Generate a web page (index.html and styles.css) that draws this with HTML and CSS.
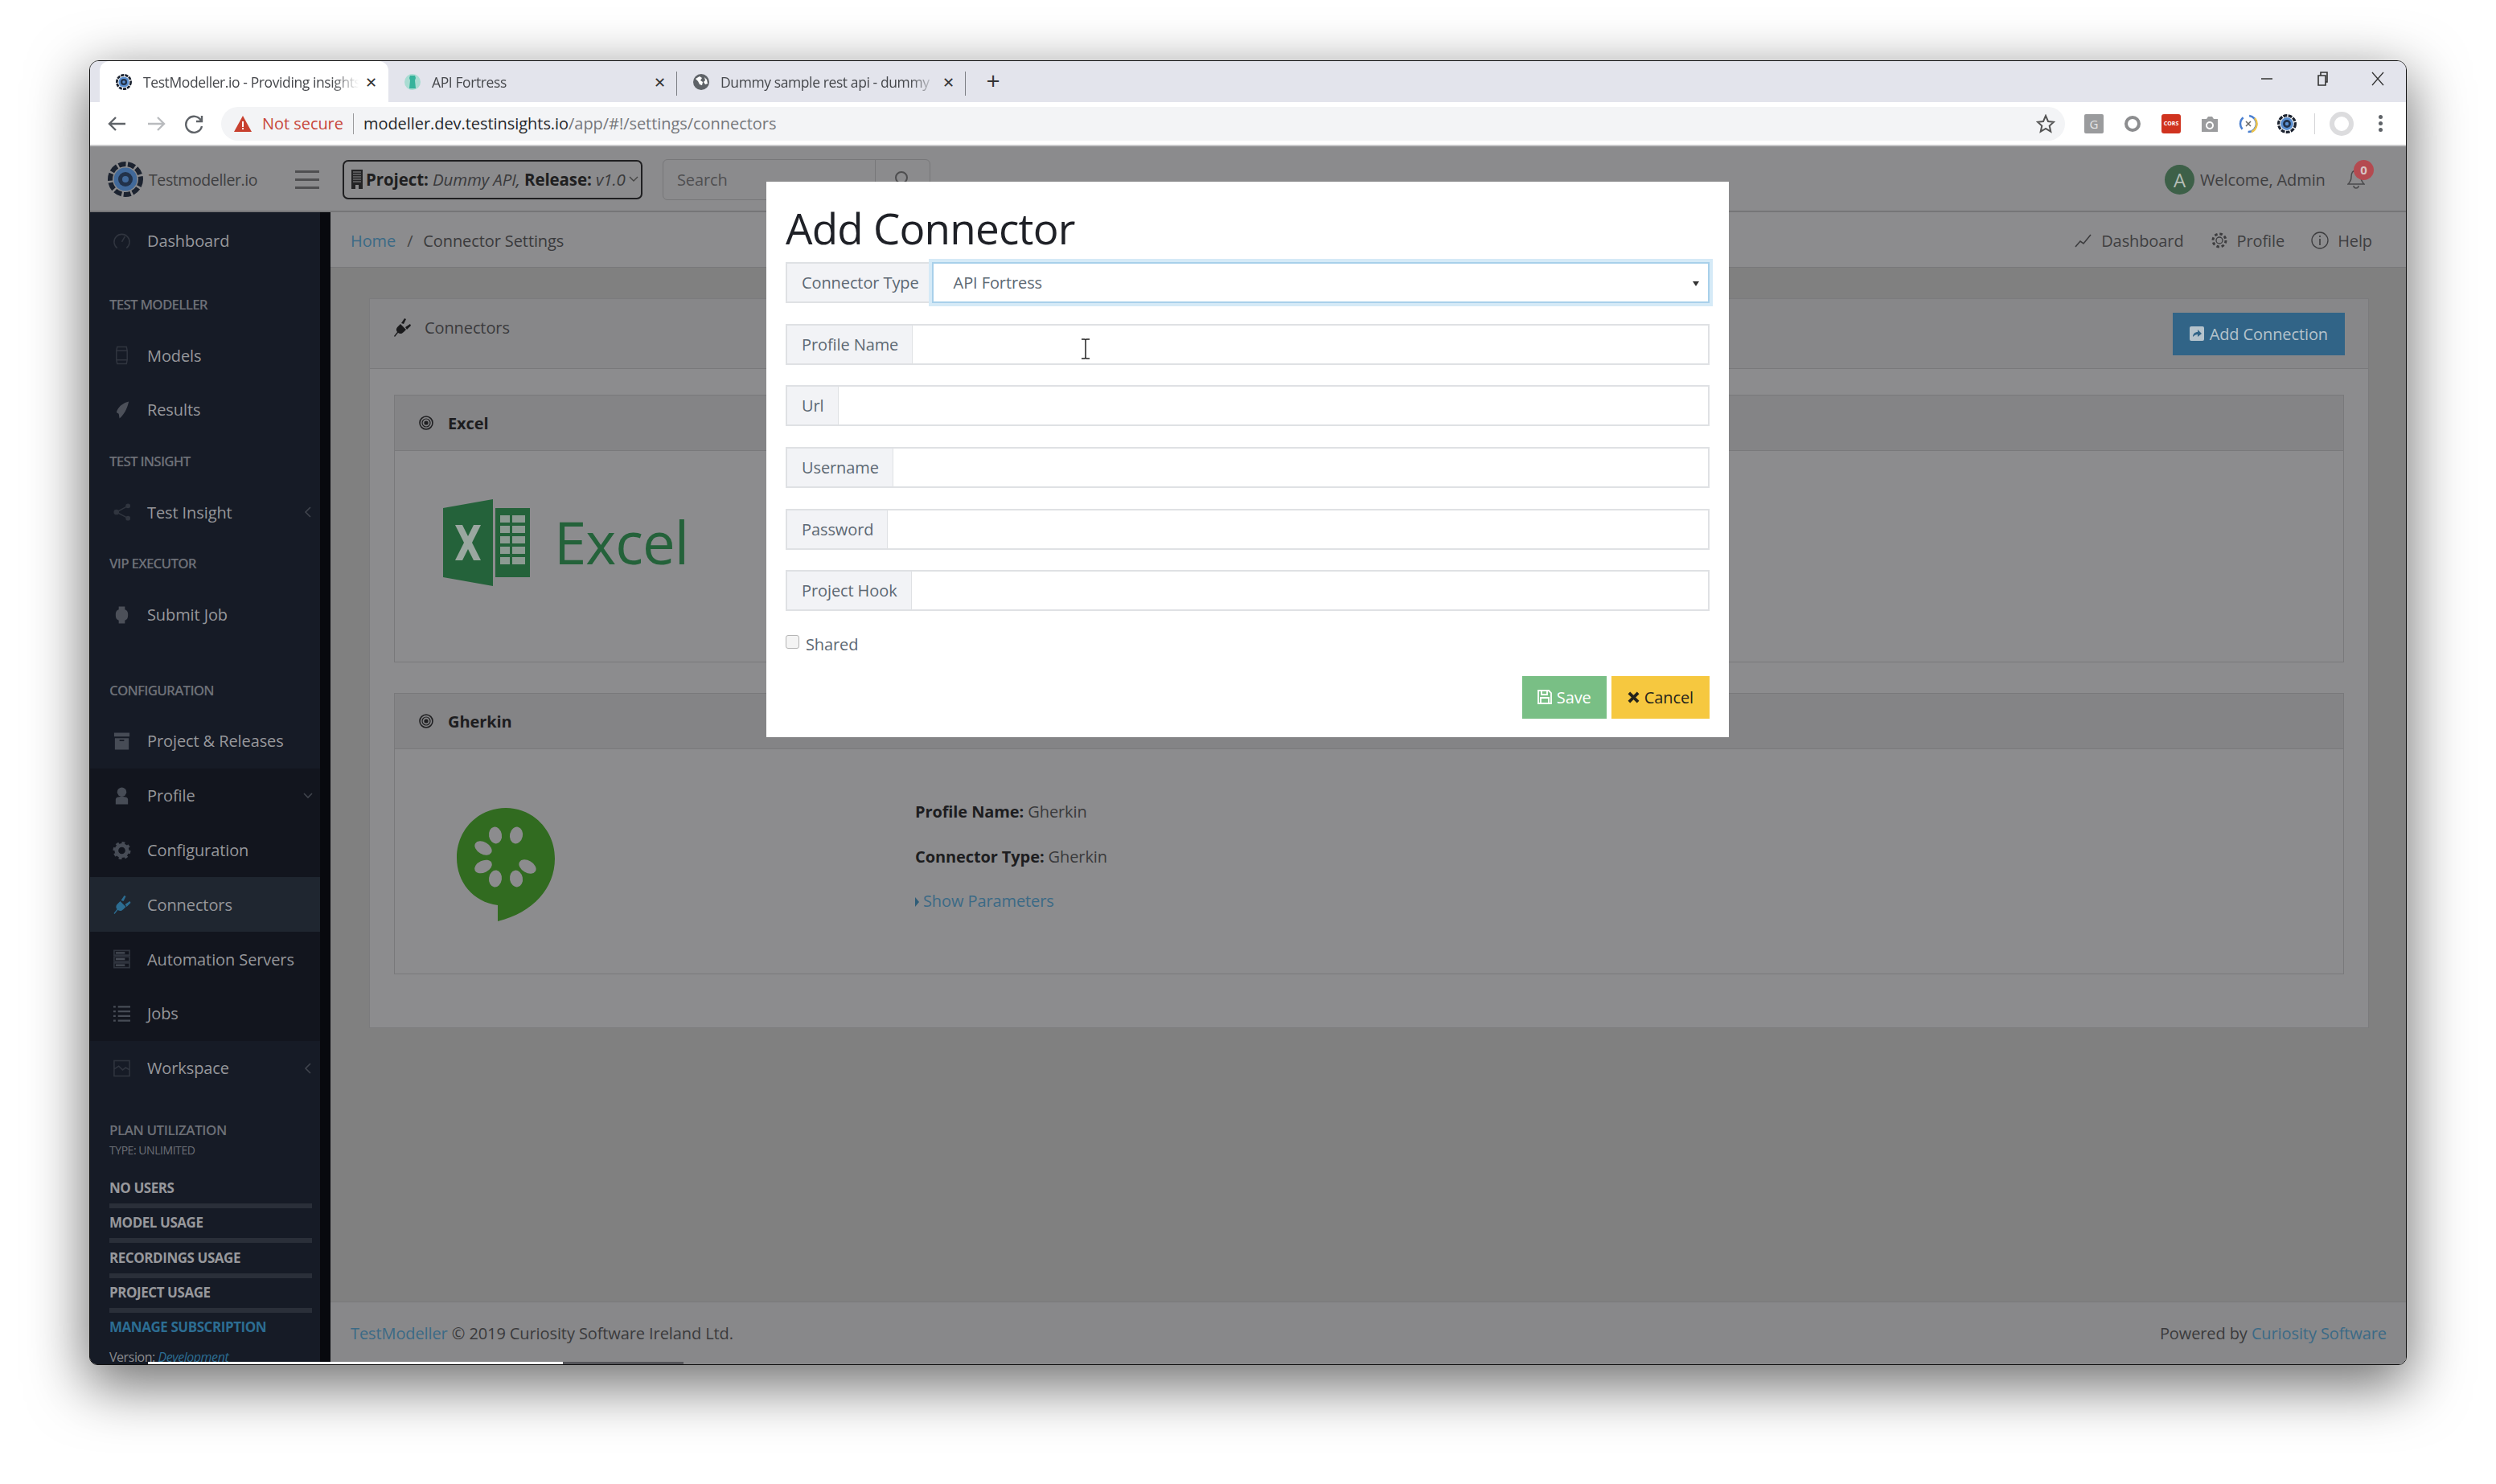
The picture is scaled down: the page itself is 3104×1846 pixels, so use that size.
FILE: index.html
```html
<!DOCTYPE html>
<html lang="en">

<head>
   <meta charset="UTF-8">
   <title>TestModeller.io - Connectors</title>
   <link rel="stylesheet" href="styles.css">
</head>

<body>
   <svg class="defs" width="0" height="0">
      <symbol id="tm-logo" viewBox="0 0 44 44">
         <circle cx="22" cy="22" r="19" fill="none" stroke="#1c2330" stroke-width="6" stroke-dasharray="9 2.5"/>
         <circle cx="22" cy="22" r="14.500" fill="currentColor"/>
         <circle cx="22" cy="22" r="9" fill="#22324a"/>
         <circle cx="22" cy="22" r="4" fill="currentColor"/>
      </symbol>
      <symbol id="bullseye" viewBox="0 0 18 18">
         <circle cx="9" cy="9" r="8" fill="none" stroke="#1f1f21" stroke-width="1.6"/>
         <circle cx="9" cy="9" r="5" fill="none" stroke="#1f1f21" stroke-width="1.2"/>
         <circle cx="9" cy="9" r="2.6" fill="#1f1f21"/>
      </symbol>
      <symbol id="plug" viewBox="0 0 22 24">
         <path d="M1 23l4-5c-2-3-1-5 1-7l3-3 7 7-3 3c-2 2-4 3-7 1l-4 5zM10 7l4-6 2 1-3 6zM15 12l6-4 1 2-5 5z"/>
      </symbol>
   </svg>

   <div class="window">

      <!-- browser chrome -->
      <div class="tabstrip">
         <div class="tab tab-active">
            <svg class="favicon tm-blue"><use href="#tm-logo"/></svg>
            <span class="tab-title">TestModeller.io - Providing insights</span>
            <span class="tab-close">✕</span>
         </div>
         <div class="tab tab-sep">
            <svg class="favicon" viewBox="0 0 20 20">
               <circle cx="10" cy="10" r="10" fill="#a9dcd2"/>
               <path d="M7 2h6l1 3-1 3 1 10H6l1-10-1-3z" fill="#35b39b"/>
            </svg>
            <span class="tab-title">API Fortress</span>
            <span class="tab-close">✕</span>
         </div>
         <div class="tab tab-sep">
            <svg class="favicon" viewBox="0 0 20 20">
               <circle cx="10" cy="10" r="10" fill="#5f6368"/>
               <path d="M3 6l5-3 3 2-2 3 3 2-1 4-3-1-2-4zM14 4l3 3 1 5-3 1-2-3 2-2z" fill="#fff"/>
            </svg>
            <span class="tab-title">Dummy sample rest api - dummy</span>
            <span class="tab-close">✕</span>
         </div>
         <div class="new-tab">+</div>
         <div class="win-controls">
            <svg viewBox="0 0 20 20"><path d="M3 10h14" stroke="#333" stroke-width="1.6"/></svg>
            <svg viewBox="0 0 20 20"><path d="M5 6h9v12H5zM8 6V2h8v12h-2" fill="none" stroke="#333" stroke-width="1.6"/></svg>
            <svg viewBox="0 0 20 20"><path d="M3 2l14 16M17 2L3 18" stroke="#333" stroke-width="1.3"/></svg>
         </div>
      </div>

      <div class="toolbar">
         <svg class="nav-btn" viewBox="0 0 48 24"><path d="M34 12H14M22 4l-8 8 8 8" fill="none" stroke="#5f6368" stroke-width="2.4"/></svg>
         <svg class="nav-btn" viewBox="0 0 48 24"><path d="M14 12h20M26 4l8 8-8 8" fill="none" stroke="#b9bbbe" stroke-width="2.4"/></svg>
         <svg class="nav-btn" viewBox="0 0 48 24"><path d="M32 8a10 10 0 1 0 1 7M33 2v7h-7" fill="none" stroke="#5f6368" stroke-width="2.4"/></svg>
         <div class="omnibox">
            <svg class="warn" viewBox="0 0 22 20"><path d="M11 0l11 20H0z" fill="#c8402f"/><path d="M10 7h2v7h-2zM10 15h2v2h-2z" fill="#fff"/></svg>
            <span class="not-secure">Not secure</span>
            <span class="omni-sep"></span>
            <span class="url">modeller.dev.testinsights.io<span class="url-path">/app/#!/settings/connectors</span></span>
            <svg class="star" viewBox="0 0 24 24"><path d="M12 2l3 7 7 .7-5.300 4.800 1.600 7.200L12 18l-6.300 3.700 1.600-7.200L2 9.700 9 9z" fill="none" stroke="#555" stroke-width="2"/></svg>
         </div>
         <div class="ext"><span class="ext-g">G</span></div>
         <div class="ext"><span class="ext-ring"></span></div>
         <div class="ext"><span class="ext-cors">CORS</span></div>
         <div class="ext">
            <svg class="ext-svg" viewBox="0 0 24 24"><path d="M2 6h6l2-3h5l2 3h5v16H2z" fill="#9b9c9e"/><circle cx="12" cy="14" r="5" fill="#fff"/><circle cx="12" cy="14" r="3" fill="#9b9c9e"/></svg>
         </div>
         <div class="ext">
            <svg class="ext-svg" viewBox="0 0 24 24"><circle cx="12" cy="12" r="10" fill="none" stroke="#4a7fd0" stroke-width="2.500" stroke-dasharray="16 8"/><path d="M20 5a11 11 0 0 1-4 17" fill="none" stroke="#edc34a" stroke-width="2.500"/><path d="M9 9l6 6M15 9l-6 6" stroke="#666" stroke-width="1.500"/></svg>
         </div>
         <div class="ext"><svg class="ext-svg tm-blue"><use href="#tm-logo"/></svg></div>
         <span class="ext-sep"></span>
         <div class="ext"><span class="ext-profile"></span></div>
         <div class="ext"><span class="ext-dots"></span></div>
      </div>

      <!-- the app, colours are as they look under the modal backdrop -->
      <div class="app">
         <header class="app-header">
            <svg class="brand-logo"><use href="#tm-logo"/></svg>
            <span class="brand-name">Testmodeller.io</span>
            <div class="hamburger"><span></span><span></span><span></span></div>
            <div class="project-select">
               <svg class="building" viewBox="0 0 14 24"><path d="M0 0h14v24H0z" fill="#232325"/><path d="M2 3h10M2 6h10M2 9h10M2 12h10M2 15h10" stroke="#8b8b8d" stroke-width="1.200"/><path d="M5 19h4v5H5z" fill="#8b8b8d"/></svg>
               <span><b>Project:</b> <i>Dummy API,</i> <b>Release:</b> <i>v1.0</i></span>
               <svg class="chev" viewBox="0 0 12 8"><path d="M1 1l5 5 5-5" fill="none" stroke="#444" stroke-width="1.400"/></svg>
            </div>
            <div class="search">
               <span class="search-text">Search</span>
               <span class="search-btn">
                  <svg viewBox="0 0 22 22" width="22" height="22"><circle cx="9" cy="9" r="7" fill="none" stroke="#4d4d4f" stroke-width="2"/><path d="M14 14l6 6" stroke="#4d4d4f" stroke-width="2"/></svg>
               </span>
            </div>
            <div class="header-right">
               <span class="avatar">A</span>
               <span class="welcome">Welcome, Admin</span>
               <span class="bell">
                  <svg viewBox="0 0 22 28" width="22" height="28"><path d="M11 3c-5 0-6 4-6 8 0 5-2 7-4 9h20c-2-2-4-4-4-9 0-4-1-8-6-8zM8 22a3 3 0 0 0 6 0" fill="none" stroke="#4a4a4c" stroke-width="1.500"/></svg>
                  <span class="badge">0</span>
               </span>
            </div>
         </header>

         <div class="app-body">
            <nav class="sidebar">
               <div class="side-inner">
                  <a class="nav-item">
                     <svg class="nav-icon" viewBox="0 0 24 24"><path d="M6 21a10 10 0 1 1 12 0M12 13l4-7" fill="none" stroke="#30353f" stroke-width="1.600"/></svg>
                     Dashboard
                  </a>
                  <div class="nav-title nav-title-first">TEST MODELLER</div>
                  <a class="nav-item">
                     <svg class="nav-icon" viewBox="0 0 24 24"><path d="M6 1h12l1 5v12l-1 5H6l-1-5V6zM5 6h14M5 18h14" fill="none" stroke="#30353f" stroke-width="1.600"/></svg>
                     Models
                  </a>
                  <a class="nav-item">
                     <svg class="nav-icon" viewBox="0 0 24 24"><path d="M21 1c-8 2-14 7-16 14l3 2 1 6c5-4 10-12 12-22z" fill="#4c5059"/></svg>
                     Results
                  </a>
                  <div class="nav-title">TEST INSIGHT</div>
                  <a class="nav-item">
                     <svg class="nav-icon" viewBox="0 0 24 24"><path d="M20 4L5 12l15 8" fill="none" stroke="#30353f" stroke-width="1.600"/><circle cx="20" cy="4" r="3" fill="#30353f"/><circle cx="5" cy="12" r="3.500" fill="#30353f"/><circle cx="20" cy="20" r="3" fill="#30353f"/></svg>
                     Test Insight
                     <svg class="nav-caret" viewBox="0 0 10 16"><path d="M8 2L2 8l6 6" fill="none" stroke="#40444d" stroke-width="1.600"/></svg>
                  </a>
                  <div class="nav-title">VIP EXECUTOR</div>
                  <a class="nav-item">
                     <svg class="nav-icon" viewBox="0 0 24 24"><path d="M8 1h8v4c3 1 4 3 4 7s-1 6-4 7v4H8v-4c-3-1-4-3-4-7s1-6 4-7z" fill="#4c5059"/></svg>
                     Submit Job
                  </a>
                  <div class="nav-title nav-title-config">CONFIGURATION</div>
                  <a class="nav-item">
                     <svg class="nav-icon" viewBox="0 0 24 24"><path d="M2 1h20v5H2zM3 8h18v15H3z" fill="#474c56"/><path d="M9 11h6" stroke="#1b1f29" stroke-width="2"/></svg>
                     Project &amp; Releases
                  </a>
                  <div class="nav-group">
                     <a class="nav-item">
                        <svg class="nav-icon" viewBox="0 0 24 24"><circle cx="12" cy="7" r="6" fill="#474c56"/><path d="M4 23v-6c0-3 3-4 8-4s8 1 8 4v6z" fill="#474c56"/></svg>
                        Profile
                        <svg class="nav-caret nav-caret-down" viewBox="0 0 14 10"><path d="M2 2l5 5 5-5" fill="none" stroke="#40444d" stroke-width="1.600"/></svg>
                     </a>
                     <a class="nav-item">
                        <svg class="nav-icon" viewBox="0 0 24 24"><circle cx="12" cy="12" r="7" fill="none" stroke="#474c56" stroke-width="5"/><circle cx="12" cy="12" r="10" fill="none" stroke="#474c56" stroke-width="3" stroke-dasharray="4 3.800"/></svg>
                        Configuration
                     </a>
                     <a class="nav-item nav-active">
                        <svg class="nav-icon plug-blue"><use href="#plug"/></svg>
                        Connectors
                     </a>
                     <a class="nav-item">
                        <svg class="nav-icon" viewBox="0 0 24 24"><path d="M2 1h20v6H2zM2 9h20v6H2zM2 17h20v6H2z" fill="none" stroke="#30353f" stroke-width="1.800"/><path d="M4 4h12M4 12h12M4 20h12" stroke="#474c56" stroke-width="2.400"/></svg>
                        Automation Servers
                     </a>
                     <a class="nav-item">
                        <svg class="nav-icon" viewBox="0 0 24 24"><path d="M1 3h3M7 3h16M1 9h3M7 9h16M1 15h3M7 15h16M1 21h3M7 21h16" stroke="#474c56" stroke-width="2.500"/></svg>
                        Jobs
                     </a>
                  </div>
                  <a class="nav-item">
                     <svg class="nav-icon" viewBox="0 0 24 24"><path d="M2 2h20v20H2zM2 13l6-4 5 5 4-3 5 3" fill="none" stroke="#30353f" stroke-width="1.600"/></svg>
                     Workspace
                     <svg class="nav-caret" viewBox="0 0 10 16"><path d="M8 2L2 8l6 6" fill="none" stroke="#40444d" stroke-width="1.600"/></svg>
                  </a>

                  <div class="plan">
                     <div class="plan-title">PLAN UTILIZATION</div>
                     <div class="plan-type">TYPE: UNLIMITED</div>
                     <div class="usage">NO USERS</div>
                     <div class="usage-bar"></div>
                     <div class="usage">MODEL USAGE</div>
                     <div class="usage-bar"></div>
                     <div class="usage">RECORDINGS USAGE</div>
                     <div class="usage-bar"></div>
                     <div class="usage">PROJECT USAGE</div>
                     <div class="usage-bar"></div>
                     <div class="manage">MANAGE SUBSCRIPTION</div>
                     <div class="version">Version: <i>Development</i></div>
                  </div>
               </div>
            </nav>

            <main class="main">
               <div class="breadcrumb">
                  <a class="link">Home</a>
                  <span class="crumb-sep">/</span>
                  <span>Connector Settings</span>
                  <div class="crumb-right">
                     <span class="crumb-link">
                        <svg viewBox="0 0 22 20" width="22" height="20"><path d="M1 18l6-7 4 3 9-11" fill="none" stroke="#3c3c3e" stroke-width="1.600"/></svg>
                        Dashboard
                     </span>
                     <span class="crumb-link">
                        <svg viewBox="0 0 22 24" width="22" height="24"><circle cx="11" cy="12" r="4" fill="none" stroke="#3c3c3e" stroke-width="1.300"/><circle cx="11" cy="12" r="8" fill="none" stroke="#3c3c3e" stroke-width="3" stroke-dasharray="3.500 2.800"/></svg>
                        Profile
                     </span>
                     <span class="crumb-link">
                        <svg viewBox="0 0 22 24" width="22" height="24"><circle cx="11" cy="12" r="10" fill="none" stroke="#3c3c3e" stroke-width="1.300"/><path d="M11 10v8M11 6v2" stroke="#3c3c3e" stroke-width="1.600"/></svg>
                        Help
                     </span>
                  </div>
               </div>

               <div class="page">
                  <section class="card">
                     <div class="card-head">
                        <svg class="plug-black head-label"><use href="#plug"/></svg>
                        <span class="head-label">Connectors</span>
                        <button class="add-btn">
                           <svg viewBox="0 0 18 18" width="18" height="18"><path d="M2 0h14a2 2 0 0 1 2 2v14a2 2 0 0 1-2 2H2a2 2 0 0 1-2-2V2a2 2 0 0 1 2-2z" fill="#b5c3cc"/><path d="M4 13c0-4 3-6 6-6V4l5 5-5 4v-3c-2 0-4 1-6 3z" fill="#316487"/></svg>
                           Add Connection
                        </button>
                     </div>

                     <div class="card-body">
                        <div class="sub-card">
                           <div class="sub-head">
                              <svg class="bullseye"><use href="#bullseye"/></svg>
                              <b>Excel</b>
                           </div>
                           <div class="sub-body excel-body">
                              <svg class="excel-icon" viewBox="0 0 108 108">
                                 <path d="M0 11L62 0v108L0 97z" fill="#24623a"/>
                                 <path d="M65 11h43v86H65z" fill="#24623a"/>
                                 <path d="M15 32h9l7 14 7-14h9L36 54l11 22h-9l-7-14-7 14h-9l11-22z" fill="#9aa7a0"/>
                                 <path d="M71 20h12v9H71zM86 20h16v9H86zM71 33h12v9H71zM86 33h16v9H86zM71 46h12v9H71zM86 46h16v9H86zM71 59h12v9H71zM86 59h16v9H86zM71 72h12v9H71zM86 72h16v9H86z" fill="#8c9a92"/>
                              </svg>
                              <span class="excel-word">Excel</span>
                           </div>
                        </div>

                        <div class="sub-card">
                           <div class="sub-head">
                              <svg class="bullseye"><use href="#bullseye"/></svg>
                              <b>Gherkin</b>
                           </div>
                           <div class="sub-body gherkin-body">
                              <svg class="cuke" viewBox="0 0 123 141">
                                 <path d="M61 0c34 0 61 28 61 63 0 37-27 67-71 78v-20C20 117 0 92 0 62 0 27 27 0 61 0z" fill="#316b20"/>
                                 <g fill="#8c8c8e">
                                    <ellipse cx="48" cy="34" rx="8" ry="10.500" transform="rotate(-10 48 34)"/>
                                    <ellipse cx="74" cy="34" rx="8" ry="10.500" transform="rotate(12 74 34)"/>
                                    <ellipse cx="33" cy="50" rx="11.500" ry="7.500" transform="rotate(30 33 50)"/>
                                    <ellipse cx="33" cy="73" rx="11.500" ry="7.500" transform="rotate(-25 33 73)"/>
                                    <ellipse cx="88" cy="73" rx="11.500" ry="7.500" transform="rotate(30 88 73)"/>
                                    <ellipse cx="48" cy="88" rx="8" ry="10.500" transform="rotate(8 48 88)"/>
                                    <ellipse cx="74" cy="88" rx="8" ry="10.500" transform="rotate(-10 74 88)"/>
                                 </g>
                              </svg>
                              <div class="details">
                                 <div><b>Profile Name:</b> Gherkin</div>
                                 <div><b>Connector Type:</b> Gherkin</div>
                                 <div><a class="link"><span class="tri"></span>Show Parameters</a></div>
                              </div>
                           </div>
                        </div>
                     </div>
                  </section>
               </div>

               <footer class="footer">
                  <span><a class="link">TestModeller</a> © 2019 Curiosity Software Ireland Ltd.</span>
                  <span>Powered by <a class="link">Curiosity Software</a></span>
               </footer>
            </main>
         </div>
      </div>

      <!-- modal -->
      <div class="modal">
         <h1>Add Connector</h1>
         <div class="form">
            <div class="field field-focus">
               <label>Connector Type</label>
               <div class="control select-control">API Fortress<span class="select-arrow"></span></div>
            </div>
            <div class="field"><label>Profile Name</label><div class="control"></div></div>
            <div class="field"><label>Url</label><div class="control"></div></div>
            <div class="field"><label>Username</label><div class="control"></div></div>
            <div class="field"><label>Password</label><div class="control"></div></div>
            <div class="field"><label>Project Hook</label><div class="control"></div></div>
         </div>
         <div class="shared"><span class="check"></span>Shared</div>
         <div class="modal-actions">
            <button class="btn btn-save">
               <svg viewBox="0 0 18 18" width="18" height="18"><path d="M1 1h13l3 3v13H1zM5 1v5h7V1M4 17v-7h10v7" fill="none" stroke="#fff" stroke-width="1.800"/></svg>
               Save
            </button>
            <button class="btn btn-cancel">
               <svg viewBox="0 0 16 16" width="15" height="15"><path d="M2 2l12 12M14 2L2 14" stroke="#26251c" stroke-width="4"/></svg>
               Cancel
            </button>
         </div>
      </div>

      <svg class="ibeam" viewBox="0 0 12 26"><path d="M1 1h4l1 1 1-1h4M6 2v22M1 25h4l1-1 1 1h4" fill="none" stroke="#222" stroke-width="1.500"/></svg>
      <div class="progress"><span class="prog-white"></span><span class="prog-dark"></span></div>
   </div>
</body>

</html>
```

FILE: styles.css
```css
* {
   box-sizing: border-box;
}

html,
body {
   margin: 0;
   height: 100%;
   background: #fff;
}

body {
   padding: 75px 0 0 111px;
   font-family: 'Open Sans', 'Noto Sans', sans-serif;
   font-size: 20px;
   letter-spacing: -0.1px;
   color: #3a3a3c;
   overflow: hidden;
}

.defs {
   position: absolute;
}

a {
   text-decoration: none;
}

.link {
   color: #3b6a86;
}

.tm-blue {
   color: #5a8fd0;
}

/* window */

.window {
   position: relative;
   width: 2882px;
   height: 1623px;
   display: flex;
   flex-direction: column;
   border: 1px solid #111;
   border-radius: 12px 12px 10px 10px;
   box-shadow: 0 22px 70px 4px rgba(0, 0, 0, 0.56);
   overflow: hidden;
}

/* tabs */

.tabstrip {
   height: 51px;
   flex: none;
   display: flex;
   padding-left: 12px;
   background: #e3e4ec;
   font-size: 17.5px;
   letter-spacing: -0.4px;
   color: #45474b;
}

.tab {
   position: relative;
   width: 359px;
   display: flex;
   align-items: center;
   padding: 0 14px 0 20px;
}

.tab-active {
   background: #fff;
   border-radius: 12px 12px 0 0;
}

.tab-sep::after {
   content: "";
   position: absolute;
   right: 0;
   top: 13px;
   height: 30px;
   width: 1px;
   background: #7c7e84;
}

.favicon {
   width: 20px;
   height: 20px;
   flex: none;
   margin-right: 14px;
}

.tab-title {
   flex: 1;
   white-space: nowrap;
   overflow: hidden;
   -webkit-mask-image: linear-gradient(90deg, #000 88%, transparent);
   mask-image: linear-gradient(90deg, #000 88%, transparent);
}

.tab-close {
   font-size: 18px;
   margin-left: 8px;
   color: #333;
}

.new-tab {
   width: 68px;
   text-align: center;
   font-size: 30px;
   line-height: 48px;
   color: #333;
}

.win-controls {
   margin-left: auto;
   display: flex;
   gap: 49px;
   padding: 12px 25px 0 0;
}

.win-controls svg {
   width: 20px;
   height: 20px;
}

/* toolbar */

.toolbar {
   height: 55px;
   flex: none;
   display: flex;
   align-items: center;
   padding: 0 8px 0 10px;
   background: #fff;
   border-bottom: 2px solid #c8c8ca;
}

.nav-btn {
   width: 48px;
   height: 24px;
   flex: none;
}

.omnibox {
   flex: 1;
   height: 42px;
   margin: 0 12px 0 9px;
   display: flex;
   align-items: center;
   padding-left: 16px;
   background: #f3f4f6;
   border-radius: 21px;
   font-size: 20px;
   letter-spacing: -0.05px;
}

.warn {
   width: 22px;
   height: 20px;
   margin-right: 13px;
}

.not-secure {
   color: #c8473a;
}

.omni-sep {
   width: 1px;
   height: 26px;
   margin: 0 12px 0 12px;
   background: #9a9a9c;
}

.url {
   color: #26282b;
}

.url-path {
   color: #76787c;
}

.star {
   width: 24px;
   height: 24px;
   margin: 0 12px 0 auto;
}

.ext {
   width: 48px;
   flex: none;
   display: flex;
   align-items: center;
   justify-content: center;
}

.ext-g {
   width: 24px;
   height: 24px;
   background: #9a9b9d;
   border-radius: 2px;
   color: #e6e6e6;
   text-align: center;
   line-height: 24px;
   font-size: 15px;
}

.ext-ring {
   width: 20px;
   height: 20px;
   border: 4px solid #8c8d8f;
   border-radius: 50%;
}

.ext-cors {
   width: 24px;
   height: 24px;
   background: #d0331f;
   border-radius: 3px;
   color: #fff;
   text-align: center;
   line-height: 24px;
   font-size: 7px;
   font-weight: 700;
   letter-spacing: 0;
}

.ext-svg {
   width: 24px;
   height: 24px;
}

.ext-sep {
   width: 1px;
   height: 26px;
   margin: 0 9px 0 10px;
   background: #d5d5d7;
}

.ext-profile {
   width: 30px;
   height: 30px;
   border: 6px solid #dcdcde;
   border-radius: 50%;
}

.ext-dots {
   width: 5px;
   height: 5px;
   border-radius: 50%;
   background: #5f6368;
   box-shadow: 0 -8px 0 #5f6368, 0 8px 0 #5f6368;
}

/* app header */

.app {
   flex: 1;
   min-height: 0;
   display: flex;
   flex-direction: column;
   background: #808080;
}

.app-header {
   height: 82px;
   flex: none;
   display: flex;
   align-items: center;
   padding: 2px 0 0 22px;
   background: #8b8b8d;
   border-bottom: 2px solid #767678;
}

.brand-logo {
   width: 44px;
   height: 44px;
   color: #41699a;
}

.brand-name {
   width: 138px;
   margin-left: 7px;
   color: #3f3f41;
   font-size: 19.5px;
   letter-spacing: -0.4px;
   white-space: nowrap;
}

.hamburger {
   width: 30px;
   margin-left: 44px;
   display: flex;
   flex-direction: column;
   gap: 7px;
}

.hamburger span {
   height: 3px;
   background: #4f4f51;
}

.project-select {
   width: 373px;
   height: 49px;
   margin-left: 29px;
   display: flex;
   align-items: center;
   padding: 0 8px 0 9px;
   border: 2px solid #1f1f21;
   border-radius: 7px;
   white-space: nowrap;
   font-size: 20.5px;
   letter-spacing: -0.1px;
   color: #1f1f21;
}

.project-select i {
   color: #3a3a3c;
}

.building {
   width: 14px;
   height: 24px;
   flex: none;
   margin-right: 4px;
}

.chev {
   width: 12px;
   height: 8px;
   margin-left: 4px;
   flex: none;
}

.search {
   width: 333px;
   height: 51px;
   margin-left: 25px;
   display: flex;
   align-items: center;
   border: 1px solid #777779;
   border-radius: 6px;
}

.search-text {
   flex: 1;
   padding-left: 17px;
   color: #4f4f51;
}

.search-btn {
   width: 68px;
   height: 100%;
   display: flex;
   align-items: center;
   justify-content: center;
   border-left: 1px solid #777779;
}

.header-right {
   margin-left: auto;
   padding-right: 51px;
   display: flex;
   align-items: center;
}

.avatar {
   width: 37px;
   height: 37px;
   border-radius: 50%;
   background: #3d6048;
   color: #b4bdb6;
   text-align: center;
   line-height: 37px;
   font-size: 24px;
}

.welcome {
   width: 157px;
   margin-left: 7px;
   white-space: nowrap;
   color: #3f3f41;
}

.bell {
   position: relative;
   width: 22px;
   height: 28px;
   margin-left: 26px;
}

.badge {
   position: absolute;
   left: 8px;
   top: -10px;
   width: 25px;
   height: 25px;
   border-radius: 50%;
   background: #b44a50;
   color: #d8c4c4;
   text-align: center;
   line-height: 25px;
   font-size: 15px;
   font-weight: 700;
}

/* sidebar */

.app-body {
   flex: 1;
   min-height: 0;
   display: flex;
}

.sidebar {
   width: 299px;
   flex: none;
   padding-right: 13px;
   background: #08090e;
   overflow: hidden;
}

.side-inner {
   height: 100%;
   padding-top: 1.5px;
   background: #161b26;
   color: #96979b;
}

.nav-item {
   position: relative;
   height: 67.8px;
   display: flex;
   align-items: center;
   padding-left: 71px;
   color: #96979b;
}

.nav-group {
   background: #12151e;
}

.nav-active {
   background: #1f2630;
}

.nav-icon {
   position: absolute;
   left: 28px;
   top: 22px;
   width: 23px;
   height: 24px;
   fill: #474c56;
}

.plug-blue {
   fill: #2c6d92;
}

.nav-caret {
   position: absolute;
   right: 10px;
   top: 26px;
   width: 10px;
   height: 16px;
}

.nav-caret-down {
   width: 14px;
   height: 10px;
   top: 29px;
   right: 8px;
}

.nav-title {
   height: 59.5px;
   display: flex;
   align-items: center;
   padding-left: 24px;
   font-size: 17px;
   font-weight: 600;
   letter-spacing: -0.8px;
   color: #6d7077;
}

.nav-title-first {
   margin-top: 15.5px;
}

.nav-title-config {
   margin-top: 30px;
}

.plan {
   padding: 30px 10px 0 24px;
   font-weight: 700;
   font-size: 17px;
   letter-spacing: -0.45px;
   white-space: nowrap;
}

.plan-title {
   line-height: 26px;
   font-weight: 600;
   color: #6d7077;
}

.plan-type {
   line-height: 22px;
   margin-top: 1px;
   font-size: 14px;
   font-weight: 400;
   color: #6d7077;
}

.usage {
   line-height: 24px;
   margin-top: 6.6px;
   color: #97989c;
}

.plan-type + .usage {
   margin-top: 24px;
}

.usage-bar {
   height: 6px;
   margin-top: 7px;
   background: #2a2f39;
}

.manage {
   line-height: 24px;
   margin-top: 6px;
   color: #2c6d92;
}

.version {
   margin-top: 13px;
   line-height: 24px;
   font-size: 16px;
   font-weight: 400;
   color: #8a8b8f;
}

.version i {
   color: #2c6d92;
}

/* main content */

.main {
   flex: 1;
   min-width: 0;
   display: flex;
   flex-direction: column;
}

.breadcrumb {
   height: 69px;
   flex: none;
   display: flex;
   align-items: center;
   padding: 2px 42px 0 25px;
   background: #8c8c8e;
   border-bottom: 1px solid #78787a;
}

.crumb-sep {
   margin: 0 13px 0 14px;
   color: #444;
}

.crumb-right {
   margin-left: auto;
   display: flex;
   gap: 33px;
}

.crumb-link {
   display: flex;
   align-items: center;
   gap: 11px;
   color: #3f3f41;
}

.page {
   flex: 1;
   min-height: 0;
   padding: 38px 46px 0 48px;
}

.card {
   background: #8c8c8e;
   border: 1px solid #7b7b7d;
}

.card-head {
   height: 87px;
   display: flex;
   align-items: center;
   padding: 0 29px;
   background: #878789;
   border-bottom: 1px solid #79797b;
}

.head-label {
   margin-bottom: 16px;
}

.plug-black {
   width: 22px;
   height: 24px;
   margin-right: 17px;
   fill: #1a1a1c;
}

.add-btn {
   height: 53px;
   margin-left: auto;
   display: flex;
   align-items: center;
   gap: 7px;
   padding: 0 21px;
   border: 0;
   background: #316487;
   color: #b5c3cc;
   font: inherit;
   letter-spacing: -0.1px;
}

.card-body {
   padding: 32px 30px 66px;
   display: flex;
   flex-direction: column;
   gap: 38px;
}

.sub-card {
   border: 1px solid #79797b;
}

.sub-head {
   height: 69px;
   display: flex;
   align-items: center;
   padding-left: 30px;
   background: #848486;
   border-bottom: 1px solid #79797b;
   color: #1d1d1f;
}

.bullseye {
   width: 18px;
   height: 18px;
   margin-right: 18px;
}

.sub-body {
   display: flex;
}

.excel-body {
   height: 262px;
   padding: 60px 0 0 60px;
   align-items: flex-start;
}

.excel-icon {
   width: 108px;
   height: 108px;
   flex: none;
}

.excel-word {
   margin: 8px 0 0 30px;
   font-size: 72.5px;
   line-height: 90px;
   letter-spacing: -1px;
   color: #24623a;
}

.gherkin-body {
   height: 279px;
   padding: 73px 0 0 77px;
   align-items: flex-start;
}

.cuke {
   width: 123px;
   height: 141px;
   flex: none;
}

.details {
   margin: -9px 0 0 447px;
   display: flex;
   flex-direction: column;
   gap: 28px;
   line-height: 27.500px;
}

.details b {
   color: #1d1d1f;
}

.tri {
   display: inline-block;
   width: 0;
   height: 0;
   margin-right: 5px;
   border-left: 5px solid #2e5d78;
   border-top: 6px solid transparent;
   border-bottom: 6px solid transparent;
}

.footer {
   height: 78px;
   flex: none;
   display: flex;
   align-items: center;
   justify-content: space-between;
   padding: 0 24px 0 25px;
   background: #88888a;
   border-top: 1px solid #79797b;
   color: #3a3a3c;
}

/* modal */

.modal {
   position: absolute;
   left: 841px;
   top: 150px;
   width: 1197px;
   height: 691px;
   padding: 0 24px 24px;
   background: #fff;
   color: #5c6873;
}

.modal h1 {
   margin: 0 0 12px;
   padding-top: 28px;
   font-size: 53px;
   line-height: 60px;
   font-weight: 500;
   letter-spacing: -0.8px;
   color: #1f2127;
}

.form {
   display: flex;
   flex-direction: column;
   gap: 25.7px;
}

.field {
   display: flex;
   height: 51px;
   border: 2px solid #dfe1e4;
}

.field label {
   display: flex;
   align-items: center;
   padding: 0 17px 0 18px;
   background: #f2f3f6;
   border-right: 1px solid #dfe1e4;
   white-space: nowrap;
}

.control {
   flex: 1;
   position: relative;
   display: flex;
   align-items: center;
   background: #fff;
}

.field-focus .control {
   margin: -2px;
   padding-left: 25px;
   border: 2px solid #a8d0ea;
   box-shadow: 0 0 0 4px #d5eaf7;
}

.select-arrow {
   position: absolute;
   right: 11px;
   top: 22px;
   border-top: 6px solid #333;
   border-left: 4px solid transparent;
   border-right: 4px solid transparent;
}

.shared {
   height: 28px;
   margin-top: 27px;
   display: flex;
   align-items: center;
}

.check {
   width: 17px;
   height: 17px;
   margin-right: 8px;
   border: 1px solid #b5b5b5;
   border-radius: 3px;
   background: #f4f4f4;
   position: relative;
   top: -3px;
}

.modal-actions {
   margin-top: 25.5px;
   display: flex;
   justify-content: flex-end;
   gap: 6px;
}

.btn {
   height: 53px;
   display: flex;
   align-items: center;
   gap: 6px;
   padding: 0 19px;
   border: 0;
   font: inherit;
   letter-spacing: -0.1px;
}

.btn-save {
   background: #79bf85;
   color: #fff;
}

.btn-cancel {
   padding: 0 20px;
   background: #f6c83f;
   color: #26251c;
}

/* overlays */

.ibeam {
   position: absolute;
   left: 1232px;
   top: 345px;
   width: 12px;
   height: 26px;
}

.progress {
   position: absolute;
   left: 72px;
   right: 0;
   bottom: 0;
   height: 3px;
   display: flex;
}

.prog-white {
   width: 516px;
   background: #fff;
}

.prog-dark {
   width: 150px;
   background: #55555a;
}
```
